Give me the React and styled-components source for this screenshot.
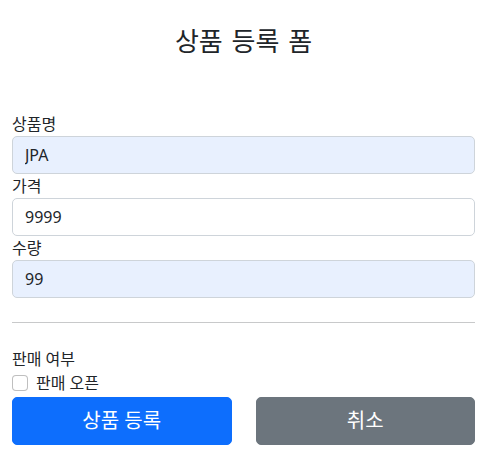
import styled, { createGlobalStyle } from "styled-components";

const GlobalStyle = createGlobalStyle`
  body {
    margin: 0;
    background: #fff;
    color: #212529;
    font-family: "Noto Sans", "Noto Sans CJK KR", sans-serif;
    font-size: 16px;
    line-height: 1.5;
  }
  * {
    box-sizing: border-box;
  }
`;

const Container = styled.div`
  max-width: 560px;
  margin: 0 auto;
  padding: 0 10px 0 12px;
`;

const Header = styled.div`
  text-align: center;
  padding: 26px 0 47px;

  h2 {
    margin: 0 0 8px;
    font-size: 26px;
    font-weight: 400;
    line-height: 1.2;
    word-spacing: 2px;
  }
`;

const Field = styled.div`
  display: flex;
  flex-direction: column;
`;

const Label = styled.label`
  display: block;
`;

const Input = styled.input`
  display: block;
  width: 100%;
  height: 38px;
  padding: 6px 12px;
  font: inherit;
  color: #212529;
  background: ${(p) => (p.$filled ? "#e8f0fe" : "#fff")};
  border: 1px solid #ced4da;
  border-radius: 5px;
  outline: none;
`;

const Divider = styled.hr`
  margin: 24px 0;
  border: 0;
  border-top: 1px solid #c8c9ca;
`;

const Check = styled.div`
  display: flex;
  align-items: center;
  gap: 8px;
  min-height: 24px;
  margin-bottom: 2px;
`;

const Box = styled.input`
  appearance: none;
  width: 16px;
  height: 16px;
  margin: 0;
  border: 1px solid rgba(0, 0, 0, 0.25);
  border-radius: 4px;
  background: #fff;
`;

const Row = styled.div`
  display: flex;
  gap: 24px;
`;

const Button = styled.button`
  flex: 1;
  height: 48px;
  padding: 8px 16px;
  font: inherit;
  font-size: 20px;
  color: #fff;
  border: 1px solid ${(p) => (p.$primary ? "#0d6efd" : "#6c757d")};
  background: ${(p) => (p.$primary ? "#0d6efd" : "#6c757d")};
  border-radius: 5px;
  cursor: pointer;
`;

export default function App() {
  return (
    <>
      <GlobalStyle />
      <Container>
        <Header>
          <h2>상품 등록 폼</h2>
        </Header>
        <form onSubmit={(e) => e.preventDefault()}>
          <Field>
            <Label htmlFor="itemName">상품명</Label>
            <Input id="itemName" defaultValue="JPA" $filled />
          </Field>
          <Field>
            <Label htmlFor="price">가격</Label>
            <Input id="price" defaultValue="9999" />
          </Field>
          <Field>
            <Label htmlFor="quantity">수량</Label>
            <Input id="quantity" defaultValue="99" $filled />
          </Field>

          <Divider />

          <div>판매 여부</div>
          <Check>
            <Box type="checkbox" id="open" />
            <label htmlFor="open">판매 오픈</label>
          </Check>

          <Row>
            <Button type="submit" $primary>
              상품 등록
            </Button>
            <Button type="button">취소</Button>
          </Row>
        </form>
      </Container>
    </>
  );
}
